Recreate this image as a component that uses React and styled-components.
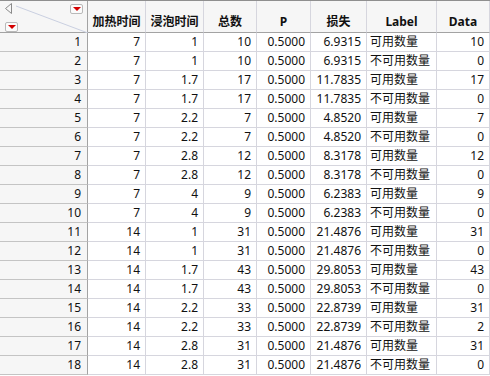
import React from "react";
import styled, { createGlobalStyle } from "styled-components";

const GlobalStyle = createGlobalStyle`
  html, body {
    margin: 0;
    padding: 0;
    background: #ffffff;
  }
  body {
    font-family: "Noto Sans", "Noto Sans CJK SC", sans-serif;
    font-size: 12px;
    color: #111;
  }
`;

const COLS = "88px 58px 58px 53px 54px 56px 70px 53px";

const rows = [
  [7, "1", 10, "6.9315", "可用数量", 10],
  [7, "1", 10, "6.9315", "不可用数量", 0],
  [7, "1.7", 17, "11.7835", "可用数量", 17],
  [7, "1.7", 17, "11.7835", "不可用数量", 0],
  [7, "2.2", 7, "4.8520", "可用数量", 7],
  [7, "2.2", 7, "4.8520", "不可用数量", 0],
  [7, "2.8", 12, "8.3178", "可用数量", 12],
  [7, "2.8", 12, "8.3178", "不可用数量", 0],
  [7, "4", 9, "6.2383", "可用数量", 9],
  [7, "4", 9, "6.2383", "不可用数量", 0],
  [14, "1", 31, "21.4876", "可用数量", 31],
  [14, "1", 31, "21.4876", "不可用数量", 0],
  [14, "1.7", 43, "29.8053", "可用数量", 43],
  [14, "1.7", 43, "29.8053", "不可用数量", 0],
  [14, "2.2", 33, "22.8739", "可用数量", 31],
  [14, "2.2", 33, "22.8739", "不可用数量", 2],
  [14, "2.8", 31, "21.4876", "可用数量", 31],
  [14, "2.8", 31, "21.4876", "不可用数量", 0],
];

const headers = ["加热时间", "浸泡时间", "总数", "P", "损失", "Label", "Data"];

const Table = styled.div`
  width: 490px;
  border-top: 1px solid #8f8f8f;
`;

const HeaderRow = styled.div`
  display: grid;
  grid-template-columns: ${COLS};
  height: 32px;
  background: #f6f6f6;
`;

const Row = styled.div`
  display: grid;
  grid-template-columns: ${COLS};
  height: 19px;
`;

const Corner = styled.div`
  position: relative;
  border-right: 1px solid #a3a3a3;
  border-bottom: 1px solid #a3a3a3;
  box-sizing: border-box;
`;

const ColHead = styled.div`
  display: flex;
  align-items: flex-end;
  justify-content: center;
  padding-bottom: 3px;
  box-sizing: border-box;
  border-right: 1px solid #d6d6de;
  border-bottom: 1px solid #a3a3a3;
  font-weight: bold;
  line-height: 14px;
  white-space: nowrap;
`;

const RowNum = styled.div`
  display: flex;
  align-items: center;
  justify-content: flex-end;
  padding-right: 6px;
  box-sizing: border-box;
  background: #f6f6f6;
  border-right: 1px solid #a3a3a3;
  border-bottom: 1px solid #c4c4c4;
  line-height: 14px;
`;

const Cell = styled.div`
  display: flex;
  align-items: center;
  justify-content: ${(p) => (p.$left ? "flex-start" : "flex-end")};
  padding: ${(p) => (p.$left ? "0 0 0 3px" : "0 5px 0 0")};
  box-sizing: border-box;
  border-right: 1px solid #d6d6de;
  border-bottom: 1px solid #d6d6de;
  line-height: 14px;
  white-space: nowrap;
  overflow: hidden;
`;

const MenuButton = styled.div`
  position: absolute;
  left: ${(p) => p.$x}px;
  top: ${(p) => p.$y}px;
  width: 13px;
  height: 10px;
  box-sizing: border-box;
  border: 1px solid #b9b9b9;
  border-radius: 2px;
  background: #fbfbfb;
  display: flex;
  align-items: center;
  justify-content: center;
  &::after {
    content: "";
    border-left: 4px solid transparent;
    border-right: 4px solid transparent;
    border-top: 4px solid #d40000;
  }
`;

const CornerArt = styled.svg`
  position: absolute;
  left: 0;
  top: 0;
`;

function CornerCell() {
  return (
    <Corner>
      <CornerArt width="88" height="32" viewBox="0 0 88 32">
        <line x1="16" y1="5" x2="88" y2="32" stroke="#c9cfe0" strokeWidth="1" />
        <path d="M11.5 2.5 L5.5 7.5 L11.5 12.5 Z" fill="none" stroke="#8a8a8a" strokeWidth="1" />
      </CornerArt>
      <MenuButton $x={70} $y={3} />
      <MenuButton $x={5} $y={21} />
    </Corner>
  );
}

export default function App() {
  return (
    <>
      <GlobalStyle />
      <Table>
        <HeaderRow>
          <CornerCell />
          {headers.map((h) => (
            <ColHead key={h}>{h}</ColHead>
          ))}
        </HeaderRow>
        {rows.map((r, i) => (
          <Row key={i}>
            <RowNum>{i + 1}</RowNum>
            <Cell>{r[0]}</Cell>
            <Cell>{r[1]}</Cell>
            <Cell>{r[2]}</Cell>
            <Cell>0.5000</Cell>
            <Cell>{r[3]}</Cell>
            <Cell $left>{r[4]}</Cell>
            <Cell>{r[5]}</Cell>
          </Row>
        ))}
      </Table>
    </>
  );
}
